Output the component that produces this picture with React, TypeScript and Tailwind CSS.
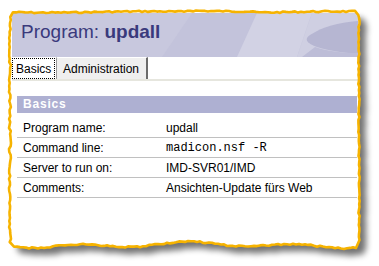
import React from "react";

// torn paper edge: deterministic jitter so the frame looks the same every render
function tornPath(x0: number, y0: number, x1: number, y1: number) {
  let s = 7;
  const rnd = () => {
    s = (s * 9301 + 49297) % 233280;
    return s / 233280 - 0.5;
  };
  const pts: [number, number][] = [];
  const step = 3;
  for (let x = x0 + 3; x <= x1 - 3; x += step) {
    pts.push([x, y0 + rnd() * 1.4 + Math.sin(x / 31) * 0.6 - (x > 185 && x < 255 ? 1.2 : 0)]);
  }
  for (let y = y0 + 3; y <= y1 - 3; y += step) {
    pts.push([x1 + rnd() * 1.4, y]);
  }
  for (let x = x1 - 3; x >= x0 + 3; x -= step) {
    pts.push([x, y1 + rnd() * 1.6 + Math.sin(x / 17) * 2 + Math.sin(x / 41) * 1.5]);
  }
  for (let y = y1 - 3; y >= y0 + 3; y -= step) {
    pts.push([x0 + rnd() * 2, y]);
  }
  return "M" + pts.map(([x, y]) => `${x.toFixed(1)} ${y.toFixed(1)}`).join(" L") + " Z";
}

const rows = [
  { label: "Program name:", value: "updall", mono: false },
  { label: "Command line:", value: "madicon.nsf -R", mono: true },
  { label: "Server to run on:", value: "IMD-SVR01/IMD", mono: false },
  { label: "Comments:", value: "Ansichten-Update fürs Web", mono: false },
];

export default function App() {
  const edge = tornPath(10, 12, 359, 245);

  return (
    <div className="relative w-[379px] h-[266px] bg-white overflow-hidden font-['Liberation_Sans',Arial,sans-serif]">
      <svg className="absolute inset-0" width="379" height="266">
        <defs>
          <filter id="blur" x="-10%" y="-10%" width="120%" height="120%">
            <feGaussianBlur stdDeviation="3" />
          </filter>
        </defs>
        <path d={edge} transform="translate(7 7)" fill="#000" opacity="0.55" filter="url(#blur)" />
        <path d={edge} fill="#fff" />
      </svg>

      <div className="relative pl-[12px] pt-[13px] w-[358px]">
        {/* banner */}
        <div className="relative h-[44px] overflow-hidden">
          <svg className="absolute inset-0" width="346" height="44">
            <rect width="346" height="44" fill="#c3c3db" />
            <path d="M0 0 H180 L150 44 H0 Z" fill="#c8c8de" />
            <path d="M245 0 H300 L285 44 H225 Z" fill="#d2d2e4" />
            <path d="M300 0 H346 V44 H285 Z" fill="#cfcfe2" />
            <path d="M346 8 C325 10 312 13 298 22 C292 26 294 30 305 34 C318 38 335 40 346 41 Z" fill="#b6b6d2" />
            <path d="M346 44 V40 C330 40 315 38 303 34 L290 44 Z" fill="#bdbdd7" />
          </svg>
          <div className="relative pl-[9px] pt-[7px] text-[19px] leading-[24px] text-[#3a3a7c]">
            Program: <span className="font-bold">updall</span>
          </div>
        </div>

        {/* tabs */}
        <div className="flex items-end h-[24px] text-[12px] text-black border-b-2 border-[#e6e6de]">
          <div className="h-[21px] w-[43px] border border-dotted border-black flex items-center pl-[3px]">
            Basics
          </div>
          <div className="ml-[1px] h-[22px] w-[92px] bg-[#efefef] border-l border-t border-l-[#9a9a9a] border-t-white border-r-2 border-r-[#6b6b6b] flex items-center pl-[6px]">
            Administration
          </div>
        </div>

        {/* section */}
        <div className="ml-[5px] mt-[15px] w-[340px]">
          <div className="h-[17px] bg-[#aeb0d2] pl-[6px] text-[12px] leading-[17px] font-bold tracking-[0.8px] text-white">
            Basics
          </div>
          <div className="mt-[5px]">
            {rows.map((r) => (
              <div key={r.label} className="flex items-center h-[20px] border-b border-[#c0c0c0] text-[12px] text-black">
                <div className="w-[149px] pl-[6px]">{r.label}</div>
                <div className={r.mono ? "font-['Liberation_Mono','Courier_New',monospace] text-[12px]" : ""}>{r.value}</div>
              </div>
            ))}
          </div>
        </div>
      </div>

      <svg className="absolute inset-0 pointer-events-none" width="379" height="266">
        <path d={edge} fill="none" stroke="#f6b300" strokeWidth="2.6" strokeLinejoin="round" />
      </svg>
    </div>
  );
}
